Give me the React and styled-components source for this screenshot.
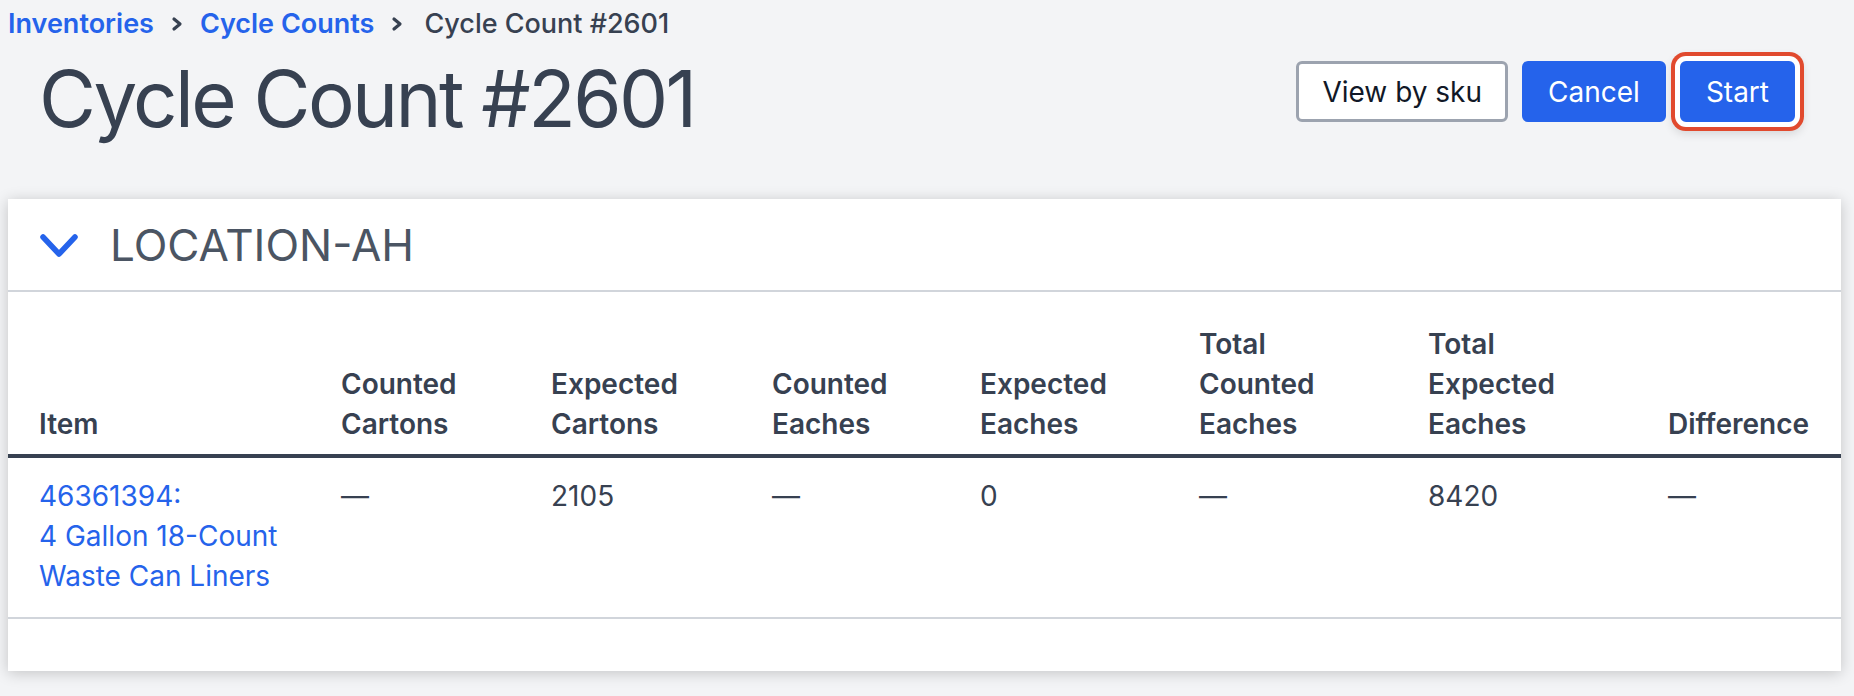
import React from 'react';
import styled, {createGlobalStyle} from 'styled-components';

const GlobalStyle = createGlobalStyle`
  html, body {
    margin: 0;
    padding: 0;
    background: #f3f4f6;
    font-family: Inter, "Noto Sans", "Liberation Sans", sans-serif;
    color: #374151;
  }
`;

const columns = [
  {key: 'item', label: ['Item'], width: 317},
  {key: 'countedCartons', label: ['Counted', 'Cartons'], width: 210},
  {key: 'expectedCartons', label: ['Expected', 'Cartons'], width: 221},
  {key: 'countedEaches', label: ['Counted', 'Eaches'], width: 208},
  {key: 'expectedEaches', label: ['Expected', 'Eaches'], width: 219},
  {key: 'totalCounted', label: ['Total', 'Counted', 'Eaches'], width: 229},
  {key: 'totalExpected', label: ['Total', 'Expected', 'Eaches'], width: 240},
  {key: 'difference', label: ['Difference'], width: 189},
];

const rows = [
  {
    id: 46361394,
    item: ['46361394:', '4 Gallon 18-Count', 'Waste Can Liners'],
    countedCartons: '—',
    expectedCartons: '2105',
    countedEaches: '—',
    expectedEaches: '0',
    totalCounted: '—',
    totalExpected: '8420',
    difference: '—',
  },
];

function ChevronRight() {
  return (
    <svg width="14" height="16" viewBox="0 0 14 16">
      <polyline points="4,3 10,8 4,13" fill="none" stroke="#374151" strokeWidth="3.2" strokeLinecap="round" strokeLinejoin="round" />
    </svg>
  );
}

function ChevronDown() {
  return (
    <svg width="40" height="28" viewBox="0 0 40 28">
      <polyline points="4,6 20,23 36,6" fill="none" stroke="#2563eb" strokeWidth="5.5" strokeLinecap="round" strokeLinejoin="round" />
    </svg>
  );
}

function App() {
  return (
    <>
      <GlobalStyle />
      <Styled.Page>
        <Styled.Breadcrumb>
          <a>Inventories</a>
          <ChevronRight />
          <a>Cycle Counts</a>
          <ChevronRight />
          <span>Cycle Count #2601</span>
        </Styled.Breadcrumb>

        <Styled.HeaderRow>
          <Styled.Title>Cycle Count #2601</Styled.Title>
          <Styled.Actions>
            <Styled.Button variant="outline">View by sku</Styled.Button>
            <Styled.Button>Cancel</Styled.Button>
            <Styled.Button focused>Start</Styled.Button>
          </Styled.Actions>
        </Styled.HeaderRow>

        <Styled.Card>
          <Styled.CardHeader>
            <ChevronDown />
            <h2>LOCATION-AH</h2>
          </Styled.CardHeader>
          <Styled.Table>
            <colgroup>
              {columns.map(c => <col key={c.key} style={{width: c.width}} />)}
            </colgroup>
            <thead>
              <tr>
                {columns.map(c => (
                  <th key={c.key}>
                    {c.label.map(l => <div key={l}>{l}</div>)}
                  </th>
                ))}
              </tr>
            </thead>
            <tbody>
              {rows.map(r => (
                <tr key={r.id}>
                  {columns.map(c => (
                    <td key={c.key}>
                      {c.key === 'item'
                        ? <a>{r.item.map(l => <div key={l}>{l}</div>)}</a>
                        : r[c.key]}
                    </td>
                  ))}
                </tr>
              ))}
            </tbody>
          </Styled.Table>
        </Styled.Card>
      </Styled.Page>
    </>
  );
}

const Styled = {
  Page: styled.div`
    padding: 6px 13px 26px 8px;
  `,
  Breadcrumb: styled.nav`
    display: flex;
    align-items: center;
    gap: 16px;
    height: 36px;
    font-size: 27px;
    line-height: 36px;

    a {
      color: #2563eb;
      font-weight: 600;
    }
    span {
      color: #374151;
      font-weight: 500;
      margin-left: 4px;
    }
  `,
  HeaderRow: styled.div`
    display: flex;
    justify-content: space-between;
    align-items: flex-start;
    margin-top: 15px;
    padding: 0 46px 0 31px;
  `,
  Title: styled.h1`
    margin: 2px 0 0;
    font-size: 78px;
    font-weight: 400;
    letter-spacing: -2.6px;
    line-height: 80px;
    color: #374151;
  `,
  Actions: styled.div`
    display: flex;
    gap: 14px;
    margin-top: 4px;
  `,
  Button: styled.button`
    height: 61px;
    padding: 0 23px;
    border-radius: 6px;
    font-family: inherit;
    font-size: 28px;
    font-weight: 400;
    border: 3px solid ${p => p.variant === 'outline' ? '#9ca3af' : '#2563eb'};
    background: ${p => p.variant === 'outline' ? '#ffffff' : '#2563eb'};
    color: ${p => p.variant === 'outline' ? '#111827' : '#ffffff'};
    box-shadow: ${p => p.focused
      ? '0 0 0 5px #ffffff, 0 0 0 9px #e14a2e, 0 4px 10px 8px rgba(0,0,0,0.12)'
      : 'none'};
  `,
  Card: styled.section`
    margin-top: 60px;
    background: #ffffff;
    box-shadow: 0 2px 14px rgba(0, 0, 0, 0.2);
    padding-bottom: 52px;
  `,
  CardHeader: styled.div`
    display: flex;
    align-items: center;
    gap: 31px;
    height: 91px;
    padding-left: 31px;
    border-bottom: 2px solid #d1d5db;

    h2 {
      margin: 0;
      font-size: 44px;
      font-weight: 400;
      color: #4b5563;
    }
  `,
  Table: styled.table`
    width: 100%;
    table-layout: fixed;
    border-collapse: collapse;
    font-size: 28px;
    line-height: 40px;

    th, td {
      text-align: left;
      padding: 0 0 0 16px;
      vertical-align: bottom;
    }
    th:first-child, td:first-child {
      padding-left: 31px;
    }
    th {
      font-weight: 600;
      color: #374151;
      padding-top: 32px;
      padding-bottom: 10px;
      border-bottom: 4px solid #374151;
    }
    td {
      vertical-align: top;
      color: #374151;
      padding-top: 18px;
      padding-bottom: 21px;
      border-bottom: 2px solid #d1d5db;
    }
    td a {
      color: #2563eb;
    }
  `,
};

export default App;
